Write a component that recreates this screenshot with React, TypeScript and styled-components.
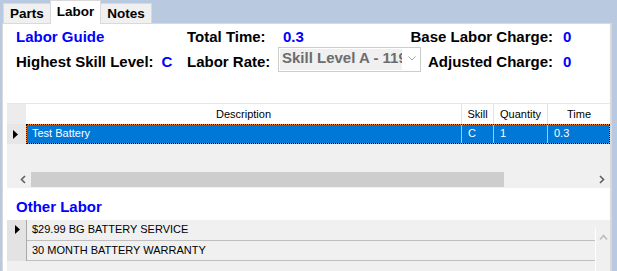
import { FC } from 'react';
import styled, { createGlobalStyle } from 'styled-components';

interface LaborLine {
  description: string;
  skill: string;
  quantity: string;
  time: string;
}

const laborLines: LaborLine[] = [{ description: 'Test Battery', skill: 'C', quantity: '1', time: '0.3' }];

const otherLabor = ['$29.99 BG BATTERY SERVICE', '30 MONTH BATTERY WARRANTY'];

const Pointer: FC = () => (
  <svg width="5" height="9" viewBox="0 0 5 9">
    <polygon points="0,0 5,4.5 0,9" fill="#000" />
  </svg>
);

const ScrollArrow: FC<{ dir: 'left' | 'right' | 'up'; color?: string }> = ({ dir, color = '#606060' }) => {
  const points = dir === 'left' ? '5,1 1.5,4.5 5,8' : dir === 'right' ? '1,1 4.5,4.5 1,8' : '1,5.5 4.5,1.5 8,5.5';
  const w = dir === 'up' ? 9 : 6;
  const h = dir === 'up' ? 7 : 9;
  return (
    <svg width={w} height={h} viewBox={`0 0 ${w} ${h}`}>
      <polyline points={points} fill="none" stroke={color} strokeWidth="1.6" />
    </svg>
  );
};

export default function App() {
  return (
    <>
      <GlobalStyle />
      <Window>
        <TabStrip>
          <Tab>Parts</Tab>
          <Tab $active>Labor</Tab>
          <Tab>Notes</Tab>
        </TabStrip>
        <Panel>
          <Summary>
            <Label $blue>Labor Guide</Label>
            <Label>Total Time:</Label>
            <Label $blue $pad={5}>0.3</Label>
            <Label $right>Base Labor Charge:</Label>
            <Label $blue $pad={10}>0</Label>

            <Pair>
              <Label>Highest Skill Level:</Label>
              <Label $blue>C</Label>
            </Pair>
            <Label>Labor Rate:</Label>
            <RateSelect>
              <RateText>Skill Level A - 119.00</RateText>
              <RateChevron>
                <svg width="8" height="5" viewBox="0 0 8 5">
                  <polyline points="0.5,0.5 4,4 7.5,0.5" fill="none" stroke="#a8a8a8" strokeWidth="1" />
                </svg>
              </RateChevron>
            </RateSelect>
            <Label $right>Adjusted Charge:</Label>
            <Label $blue $pad={10}>0</Label>
          </Summary>

          <LaborGrid>
            <GridRow>
              <Corner />
              <HeadCell>Description</HeadCell>
              <HeadCell>Skill</HeadCell>
              <HeadCell>Quantity</HeadCell>
              <HeadCell $last>Time</HeadCell>
            </GridRow>
            {laborLines.map((line) => (
              <GridRow key={line.description}>
                <RowHeader>
                  <Pointer />
                </RowHeader>
                <SelectedCells>
                  <Cell>{line.description}</Cell>
                  <Cell>{line.skill}</Cell>
                  <Cell>{line.quantity}</Cell>
                  <Cell $last>{line.time}</Cell>
                </SelectedCells>
              </GridRow>
            ))}
            <EmptyArea />
            <HScroll>
              <ArrowButton>
                <ScrollArrow dir="left" />
              </ArrowButton>
              <Thumb />
              <Track />
              <ArrowButton>
                <ScrollArrow dir="right" />
              </ArrowButton>
            </HScroll>
          </LaborGrid>

          <SectionTitle>Other Labor</SectionTitle>

          <OtherGrid>
            <OtherRows>
              {otherLabor.map((text, i) => (
                <OtherRow key={text}>
                  <OtherHeader>{i === 0 && <Pointer />}</OtherHeader>
                  <OtherCell>{text}</OtherCell>
                </OtherRow>
              ))}
            </OtherRows>
            <VScroll>
              <ScrollArrow dir="up" color="#bdbdbd" />
            </VScroll>
          </OtherGrid>
        </Panel>
      </Window>
    </>
  );
}

const GlobalStyle = createGlobalStyle`
  html, body {
    margin: 0;
    padding: 0;
  }
  body {
    background: #b9c9df;
    font-family: 'Liberation Sans', Arial, sans-serif;
  }
  * {
    box-sizing: border-box;
  }
`;

const Window = styled.div`
  width: 617px;
  height: 271px;
  overflow: hidden;
  background: #b9c9df;
`;

const TabStrip = styled.div`
  display: flex;
  align-items: flex-end;
  height: 23px;
  padding-left: 3px;
  position: relative;
  z-index: 1;
`;

const Tab = styled.div<{ $active?: boolean }>`
  height: ${(p) => (p.$active ? '24px' : '20px')};
  margin-bottom: ${(p) => (p.$active ? '-1px' : '0')};
  padding: ${(p) => (p.$active ? '1px 6px 0' : '0 6px')};
  background: ${(p) => (p.$active ? '#fff' : '#f0f0f0')};
  border: 1px solid #d9d9d9;
  border-bottom: none;
  margin-left: ${(p) => (p.$active ? '-1px' : '0')};
  margin-right: ${(p) => (p.$active ? '-1px' : '0')};
  font-size: 13.5px;
  font-weight: bold;
  line-height: 19px;
  color: #000;
`;

const Panel = styled.div`
  display: flex;
  flex-direction: column;
  margin-left: 2px;
  width: 610px;
  height: 260px;
  padding-top: 1px;
  background: #fff;
  border: 1px solid #d9d9d9;
  border-right-width: 2px;
  border-bottom: none;
`;

const Summary = styled.div`
  display: grid;
  grid-template-columns: 171px 91px 143px 132px auto;
  grid-template-rows: 22px 25px;
  align-items: end;
  padding-left: 13px;
`;

const Label = styled.div<{ $blue?: boolean; $right?: boolean; $pad?: number }>`
  justify-self: ${(p) => (p.$right ? 'end' : 'start')};
  font-size: 15px;
  font-weight: bold;
  line-height: 18px;
  padding-bottom: 1px;
  padding-left: ${(p) => p.$pad ?? 0}px;
  white-space: nowrap;
  color: ${(p) => (p.$blue ? '#0000ff' : '#000')};
`;

const Pair = styled.div`
  display: flex;
  gap: 8px;
`;

const RateSelect = styled.div`
  display: flex;
  align-self: stretch;
  padding: 1px;
  background: #fff;
  border: 1px solid #cccccc;
`;

const RateText = styled.div`
  width: 122px;
  padding-left: 2px;
  overflow: hidden;
  white-space: nowrap;
  background: #f0f0f0;
  font-size: 15px;
  font-weight: bold;
  line-height: 18px;
  color: #6d6d6d;
`;

const RateChevron = styled.div`
  flex: 1;
  display: flex;
  align-items: center;
  justify-content: center;
  padding: 0 0 2px 2px;
`;

const LaborGrid = styled.div`
  margin: 31px 0 0 4px;
  background: #f0f0f0;
`;

const GridRow = styled.div`
  display: grid;
  grid-template-columns: 19px 436px 32px 54px 1fr;
  height: 20px;

  &:first-child {
    height: 21px;
    border-top: 1px solid #e6e6e6;
    background: #fff;
  }
`;

const Corner = styled.div`
  background: #ececec;
`;

const HeadCell = styled.div<{ $last?: boolean }>`
  font-size: 11px;
  line-height: 20px;
  text-align: center;
  color: #000;
  border-right: ${(p) => (p.$last ? 'none' : '1px solid #e3e3e3')};
`;

const RowHeader = styled.div`
  display: flex;
  align-items: center;
  padding-left: 6px;
  background: #e6e6e6;
`;

const SelectedCells = styled.div`
  grid-column: 2 / -1;
  display: grid;
  grid-template-columns: 436px 32px 54px 1fr;
  background: #0078d7;
  box-shadow: inset 0 0 0 1px #ff8728;
  outline: 1px dotted #000;
  outline-offset: -1px;
`;

const Cell = styled.div<{ $last?: boolean }>`
  padding: 1px 0 0 6px;
  font-size: 11px;
  line-height: 17px;
  color: #fff;
  white-space: nowrap;
  border-right: ${(p) => (p.$last ? 'none' : '1px solid #b7c3cf')};
`;

const EmptyArea = styled.div`
  height: 27px;
`;

const HScroll = styled.div`
  display: flex;
  height: 17px;
  margin-left: 7px;
  background: #f0f0f0;
`;

const ArrowButton = styled.div`
  width: 17px;
  display: flex;
  align-items: center;
  justify-content: center;
`;

const Thumb = styled.div`
  width: 473px;
  margin: 1px 0;
  background: #cdcdcd;
`;

const Track = styled.div`
  flex: 1;
`;

const SectionTitle = styled.div`
  margin: 10px 0 4px;
  padding-left: 13px;
  font-size: 15px;
  font-weight: bold;
  line-height: 18px;
  color: #0000ff;
`;

const OtherGrid = styled.div`
  flex: 1;
  display: flex;
  margin-left: 4px;
  background: #f0f0f0;
`;

const OtherRows = styled.div`
  flex: 1;
`;

const OtherRow = styled.div`
  display: grid;
  grid-template-columns: 20px 1fr;
  height: 20px;

  &:first-child {
    height: 21px;
  }
`;

const OtherHeader = styled.div`
  display: flex;
  align-items: center;
  padding: 0 0 2px 8px;
  background: #e3e3e3;
  border-right: 1px solid #a9a9a9;
`;

const OtherCell = styled.div`
  padding-left: 5px;
  font-size: 11px;
  line-height: 18px;
  color: #000;
  white-space: nowrap;
  border-bottom: 1px solid #bfbfbf;
`;

const VScroll = styled.div`
  width: 15px;
  margin-top: 8px;
  padding-top: 6px;
  display: flex;
  justify-content: center;
  align-items: flex-start;
  border-left: 1px solid #fff;
`;
